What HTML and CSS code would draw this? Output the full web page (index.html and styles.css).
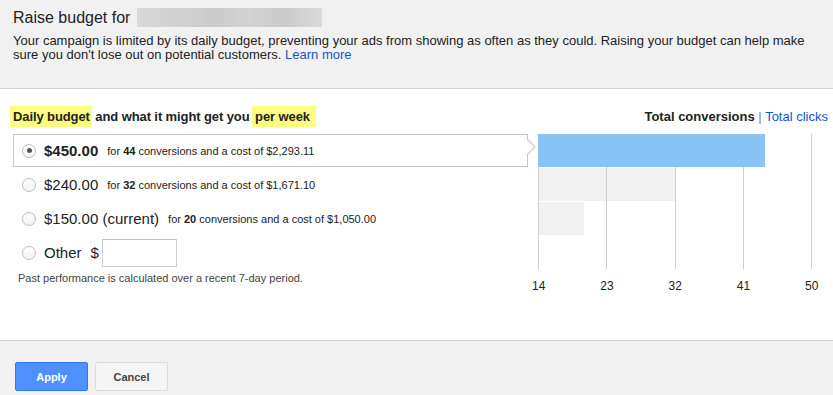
FILE: index.html
```html
<!DOCTYPE html>
<html lang="en">
<head>
    <meta charset="UTF-8">
    <title>Raise budget</title>
    <link rel="stylesheet" href="styles.css">
</head>
<body>
    <div class="header">
        <div class="title">Raise budget for <span class="hidden-name"></span></div>
        <p class="desc">Your campaign is limited by its daily budget, preventing your ads from showing as often as they could. Raising your budget can help make sure you don't lose out on potential customers. <a href="#">Learn more</a></p>
    </div>

    <div class="main">
        <div class="main-head">
            <div class="heading"><span class="mark">Daily budget</span> and what it might get you <span class="mark mark-end">per week</span></div>
            <div class="legend"><b>Total conversions</b> <span class="sep">|</span> <a href="#">Total clicks</a></div>
        </div>

        <div class="main-body">
            <div class="options">
                <label class="option selected">
                    <span class="radio"></span>
                    <span class="amount bold">$450.00</span>
                    <span class="detail">for <b>44</b> conversions and a cost of $2,293.11</span>
                </label>
                <label class="option">
                    <span class="radio"></span>
                    <span class="amount">$240.00</span>
                    <span class="detail">for <b>32</b> conversions and a cost of $1,671.10</span>
                </label>
                <label class="option">
                    <span class="radio"></span>
                    <span class="amount">$150.00 (current)</span>
                    <span class="detail">for <b>20</b> conversions and a cost of $1,050.00</span>
                </label>
                <label class="option">
                    <span class="radio"></span>
                    <span class="amount">Other</span>
                    <span class="dollar">$</span>
                    <input class="other-input" type="text">
                </label>
                <div class="note">Past performance is calculated over a recent 7-day period.</div>
            </div>

            <div class="chart">
                <div class="plot">
                    <div class="grid" style="left: 0%"></div>
                    <div class="grid" style="left: 25%"></div>
                    <div class="grid" style="left: 50%"></div>
                    <div class="grid" style="left: 75%"></div>
                    <div class="grid" style="left: 100%"></div>
                    <div class="bar active" style="width: 83.3%"></div>
                    <div class="bar" style="width: 50%"></div>
                    <div class="bar" style="width: 16.7%"></div>
                </div>
                <div class="axis">
                    <span style="left: 0%">14</span>
                    <span style="left: 25%">23</span>
                    <span style="left: 50%">32</span>
                    <span style="left: 75%">41</span>
                    <span style="left: 100%">50</span>
                </div>
            </div>
        </div>
    </div>

    <div class="footer">
        <button class="btn apply">Apply</button>
        <button class="btn cancel">Cancel</button>
    </div>
</body>
</html>
```

FILE: styles.css
```css
body {
    margin: 0;
    font-family: "Liberation Sans", Arial, sans-serif;
    color: #222;
    background: #fff;
}
a {
    color: #15c;
    text-decoration: none;
}
.header {
    height: 89px;
    box-sizing: border-box;
    padding: 8px 13px 0 13px;
    background: #f1f1f1;
    border-bottom: 1px solid #d4d4d4;
}
.title {
    font-size: 16px;
    line-height: 19px;
}
.hidden-name {
    display: inline-block;
    width: 185px;
    height: 19px;
    vertical-align: -4px;
    margin-left: 2px;
    background: linear-gradient(90deg, #d8d8d8, #cbcbcb 40%, #d2d2d2 60%, #cacaca 80%, #dadada);
}
.desc {
    margin: 7px 0 0 0;
    max-width: 800px;
    font-size: 13px;
    line-height: 14px;
}
.main {
    height: 251px;
    box-sizing: border-box;
    padding: 20px 5px 0 13px;
}
.main-head {
    display: flex;
    justify-content: space-between;
    align-items: baseline;
    font-size: 13px;
    line-height: 15px;
}
.heading {
    font-weight: bold;
    letter-spacing: -0.1px;
}
.mark {
    background: #fdfd80;
    padding: 3px 2px 3px 3px;
    margin-left: -3px;
}
.mark-end {
    margin-left: -1px;
    padding-right: 6px;
}
.legend .sep {
    color: #6a84b8;
}
.main-body {
    display: flex;
    margin-top: 10px;
}
.options {
    width: 515px;
}
.option {
    position: relative;
    display: flex;
    align-items: center;
    height: 33px;
    box-sizing: border-box;
    margin-bottom: 1px;
    padding-left: 8px;
    border: 1px solid transparent;
    white-space: nowrap;
}
.option.selected {
    border-color: #c6c6c6;
}
.option.selected::before,
.option.selected::after {
    content: "";
    position: absolute;
    top: 4px;
    width: 0;
    height: 0;
    border-style: solid;
    border-color: transparent;
}
.option.selected::before {
    right: -9px;
    border-width: 8.5px 0 8.5px 8px;
    border-left-color: #d0d0d0;
}
.option.selected::after {
    right: -7px;
    top: 5px;
    border-width: 7.5px 0 7.5px 7px;
    border-left-color: #fff;
}
.radio {
    width: 14px;
    height: 14px;
    box-sizing: border-box;
    border: 1px solid #bdbdbd;
    border-radius: 50%;
    background: linear-gradient(#fff, #f2f2f2);
    margin-right: 8px;
    position: relative;
}
.selected .radio::after {
    content: "";
    position: absolute;
    left: 3.5px;
    top: 3.5px;
    width: 5px;
    height: 5px;
    border-radius: 50%;
    background: #555;
}
.amount {
    font-size: 15px;
}
.amount.bold {
    font-weight: bold;
}
.detail {
    font-size: 11px;
    margin-left: 9px;
}
.dollar {
    font-size: 15px;
    margin-left: 9px;
}
.other-input {
    width: 75px;
    height: 28px;
    box-sizing: border-box;
    margin: 0 0 0 3px;
    border: 1px solid #d0d0d0;
    border-top-color: #c0c0c0;
}
.note {
    margin-top: 3px;
    padding-left: 5px;
    font-size: 11px;
    color: #444;
}
.chart {
    width: 273px;
    margin-left: 11px;
}
.plot {
    position: relative;
    height: 135px;
}
.grid {
    position: absolute;
    top: 0;
    bottom: 0;
    width: 1px;
    margin-left: -1px;
    background: #cfcfcf;
    z-index: 1;
}
.bar {
    height: 33px;
    margin-bottom: 1px;
    margin-left: -1px;
    background: #f1f1f1;
}
.bar.active {
    position: relative;
    z-index: 2;
    background: #8ac4f7;
}
.axis {
    position: relative;
    height: 14px;
    margin-top: 10px;
    font-size: 12px;
    line-height: 14px;
}
.axis span {
    position: absolute;
    top: 0;
    transform: translateX(-52%);
}
.footer {
    height: 55px;
    box-sizing: border-box;
    padding: 21px 15px 0 15px;
    background: #f1f1f1;
    border-top: 1px solid #d4d4d4;
    display: flex;
    gap: 7px;
}
.btn {
    width: 73px;
    height: 29px;
    font-family: "Liberation Sans", Arial, sans-serif;
    font-size: 11px;
    font-weight: bold;
    border-radius: 2px;
    cursor: pointer;
}
.apply {
    background: #4d90fe;
    border: 1px solid #3079ed;
    color: #fff;
}
.cancel {
    background: #f5f5f5;
    border: 1px solid #dcdcdc;
    color: #444;
}
```
